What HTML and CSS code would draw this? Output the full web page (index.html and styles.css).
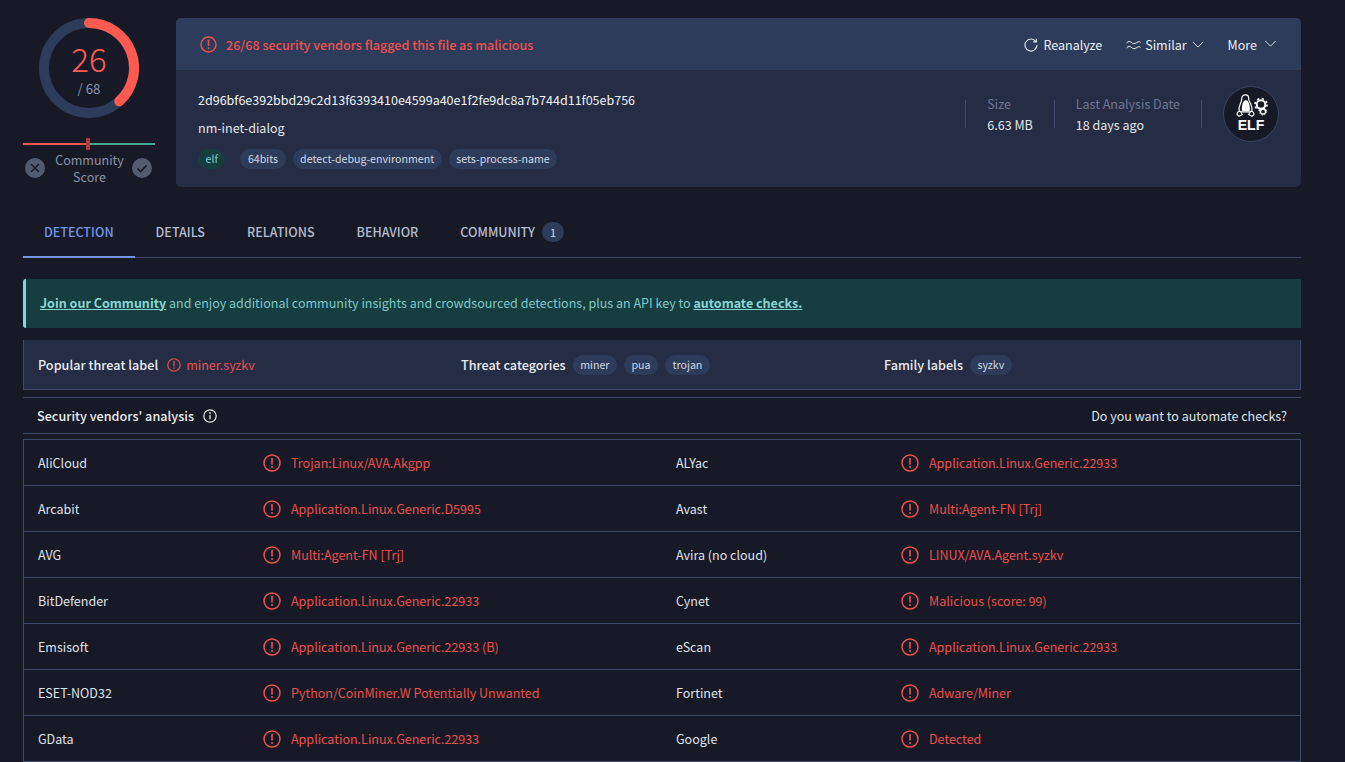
FILE: index.html
```html
<!DOCTYPE html>
<html lang="en">
<head>
<meta charset="utf-8">
<title>VirusTotal - File</title>
<link rel="stylesheet" href="styles.css">
</head>
<body>
<svg class="sprite" width="0" height="0" aria-hidden="true">
  <symbol id="alert" viewBox="0 0 18 18">
    <circle cx="9" cy="9" r="8" fill="none" stroke="currentColor" stroke-width="1.5"/>
    <path d="M9 4.6v5.4" fill="none" stroke="currentColor" stroke-width="1.6" stroke-linecap="round"/>
    <circle cx="9" cy="12.9" r="1" fill="currentColor"/>
  </symbol>
  <symbol id="chev" viewBox="0 0 14 8">
    <path d="M1 1l6 6 6-6" fill="none" stroke="currentColor" stroke-width="1"/>
  </symbol>
</svg>
<main class="page">
  <section class="top">
    <div class="score">
      <div class="ring">
        <svg class="ring-svg" width="100" height="100" viewBox="0 0 100 100">
          <circle cx="50" cy="50" r="45" fill="none" stroke="#2c3c5a" stroke-width="10"/>
          <path d="M50 5A45 45 0 0 1 80.3 83.3" fill="none" stroke="#ff5a50" stroke-width="10" stroke-linecap="round"/>
        </svg>
        <div class="ring-text">
          <div class="ring-num">26</div>
          <div class="ring-total">/ 68</div>
        </div>
      </div>
      <div class="meter"><span class="meter-red"></span><span class="meter-thumb"></span><span class="meter-green"></span></div>
      <div class="community">
        <span class="vote"><svg width="12" height="12" viewBox="0 0 12 12"><path d="M2 2l8 8M10 2l-8 8" fill="none" stroke="#181926" stroke-width="1.500"/></svg></span>
        <span class="community-label">Community<br>Score</span>
        <span class="vote"><svg width="12" height="12" viewBox="0 0 12 12"><path d="M1.500 6.500l3 3 6-6" fill="none" stroke="#181926" stroke-width="1.700"/></svg></span>
      </div>
    </div>
    <div class="card">
      <header class="card-head">
        <div class="flag"><svg class="flag-icon"><use href="#alert"/></svg><span>26/68 security vendors flagged this file as malicious</span></div>
        <nav class="actions">
          <a class="action re"><svg width="14" height="14" viewBox="0 0 14 14"><path d="M11.900 3.600A6 6 0 1 0 13 7" fill="none" stroke="currentColor" stroke-width="1.100"/><path d="M9.200 3.900h3.200V.8" fill="none" stroke="currentColor" stroke-width="1.100"/></svg>Reanalyze</a>
          <a class="action sim"><svg width="15" height="10" viewBox="0 0 15 10"><path d="M.5 3c2-2 3.500-2 5-.5s3 1.500 5 .2 2.800-1.200 4-.4M.5 8c2-2 3.500-2 5-.5s3 1.500 5 .2 2.800-1.200 4-.4" fill="none" stroke="currentColor" stroke-width="1"/></svg>Similar<svg class="chev" width="12" height="7"><use href="#chev"/></svg></a>
          <a class="action more">More<svg class="chev up" width="13" height="7"><use href="#chev"/></svg></a>
        </nav>
      </header>
      <div class="card-body">
        <div class="file">
          <div class="hash">2d96bf6e392bbd29c2d13f6393410e4599a40e1f2fe9dc8a7b744d11f05eb756</div>
          <div class="name">nm-inet-dialog</div>
          <div class="tags">
            <span class="tag tag-elf">elf</span>
            <span class="tag">64bits</span>
            <span class="tag">detect-debug-environment</span>
            <span class="tag">sets-process-name</span>
          </div>
        </div>
        <div class="stats">
          <div class="stat"><div class="stat-label">Size</div><div class="stat-value">6.63 MB</div></div>
          <div class="stat"><div class="stat-label">Last Analysis Date</div><div class="stat-value">18 days ago</div></div>
        </div>
        <div class="elf">
          <svg class="elf-art" width="33" height="25" viewBox="0 0 33 25">
            <path d="M9.500 .8c2.300 0 3.200 1.800 3.200 3.800s.9 3 2.200 5.800 1.600 5 .8 7.400H3.300c-.8-2.400-.6-4.600.8-7.400s1.700-3.800 1.700-5.800S7 .8 9.500.8z" fill="#181926" stroke="#fff" stroke-width="1.200"/>
            <path d="M7.800 7c1-.9 3.200-.9 4.100 0 1.700 3 2.400 6.600 1.700 10H6.100c-.7-3.400 0-7 1.700-10z" fill="#fff"/>
            <path d="M1 20.500c0-2 1.400-3.300 3.300-3.300l2 3.300-3.300 1.800zM18 20.500c0-2-1.400-3.300-3.300-3.300l-2 3.300 3.300 1.800z" fill="#181926" stroke="#fff" stroke-width="1.100"/>
            <circle cx="25" cy="10.500" r="4.300" fill="none" stroke="#fff" stroke-width="2"/>
            <circle cx="25" cy="10.500" r="6" fill="none" stroke="#fff" stroke-width="1.600" stroke-dasharray="2.200 2.510"/>
            <circle cx="27" cy="17.500" r="2.500" fill="#181926" stroke="#fff" stroke-width="1.300"/>
            <circle cx="27" cy="17.500" r="3.600" fill="none" stroke="#fff" stroke-width="1" stroke-dasharray="1.400 1.430"/>
          </svg>
          <span class="elf-text">ELF</span>
        </div>
      </div>
    </div>
  </section>

  <nav class="tabs">
    <a class="tab active">DETECTION</a>
    <a class="tab">DETAILS</a>
    <a class="tab">RELATIONS</a>
    <a class="tab">BEHAVIOR</a>
    <a class="tab">COMMUNITY<span class="count">1</span></a>
  </nav>

  <div class="banner"><a class="banner-link">Join our Community</a> and enjoy additional community insights and crowdsourced detections, plus an API key to <a class="banner-link">automate checks.</a></div>

  <div class="threat">
    <div class="threat-col"><b>Popular threat label</b><svg class="threat-icon"><use href="#alert"/></svg><span class="threat-name">miner.syzkv</span></div>
    <div class="threat-col"><b>Threat categories</b><span class="tag">miner</span><span class="tag">pua</span><span class="tag">trojan</span></div>
    <div class="threat-col"><b>Family labels</b><span class="tag">syzkv</span></div>
  </div>

  <div class="analysis">
    <div class="analysis-title"><b>Security vendors' analysis</b><svg width="14" height="14" viewBox="0 0 14 14"><circle cx="7" cy="7" r="6.200" fill="none" stroke="currentColor" stroke-width="1.200"/><path d="M7 6v4.200" stroke="currentColor" stroke-width="1.300"/><circle cx="7" cy="3.900" r=".9" fill="currentColor"/></svg></div>
    <span>Do you want to automate checks?</span>
  </div>

  <div class="vendors">
    <div class="cell"><span class="vendor">AliCloud</span><svg class="v-icon"><use href="#alert"/></svg><span class="verdict">Trojan:Linux/AVA.Akgpp</span></div>
    <div class="cell"><span class="vendor">ALYac</span><svg class="v-icon"><use href="#alert"/></svg><span class="verdict">Application.Linux.Generic.22933</span></div>
    <div class="cell"><span class="vendor">Arcabit</span><svg class="v-icon"><use href="#alert"/></svg><span class="verdict">Application.Linux.Generic.D5995</span></div>
    <div class="cell"><span class="vendor">Avast</span><svg class="v-icon"><use href="#alert"/></svg><span class="verdict">Multi:Agent-FN [Trj]</span></div>
    <div class="cell"><span class="vendor">AVG</span><svg class="v-icon"><use href="#alert"/></svg><span class="verdict">Multi:Agent-FN [Trj]</span></div>
    <div class="cell"><span class="vendor">Avira (no cloud)</span><svg class="v-icon"><use href="#alert"/></svg><span class="verdict">LINUX/AVA.Agent.syzkv</span></div>
    <div class="cell"><span class="vendor">BitDefender</span><svg class="v-icon"><use href="#alert"/></svg><span class="verdict">Application.Linux.Generic.22933</span></div>
    <div class="cell"><span class="vendor">Cynet</span><svg class="v-icon"><use href="#alert"/></svg><span class="verdict">Malicious (score: 99)</span></div>
    <div class="cell"><span class="vendor">Emsisoft</span><svg class="v-icon"><use href="#alert"/></svg><span class="verdict">Application.Linux.Generic.22933 (B)</span></div>
    <div class="cell"><span class="vendor">eScan</span><svg class="v-icon"><use href="#alert"/></svg><span class="verdict">Application.Linux.Generic.22933</span></div>
    <div class="cell"><span class="vendor">ESET-NOD32</span><svg class="v-icon"><use href="#alert"/></svg><span class="verdict">Python/CoinMiner.W Potentially Unwanted</span></div>
    <div class="cell"><span class="vendor">Fortinet</span><svg class="v-icon"><use href="#alert"/></svg><span class="verdict">Adware/Miner</span></div>
    <div class="cell"><span class="vendor">GData</span><svg class="v-icon"><use href="#alert"/></svg><span class="verdict">Application.Linux.Generic.22933</span></div>
    <div class="cell"><span class="vendor">Google</span><svg class="v-icon"><use href="#alert"/></svg><span class="verdict">Detected</span></div>
  </div>
</main>
</body>
</html>
```
FILE: styles.css
```css
* { box-sizing: border-box; }
html, body { height: 762px; overflow: hidden; }
body {
  margin: 0;
  background: #181926;
  color: #dfe2ea;
  font-family: "Noto Sans CJK JP", "Noto Sans", sans-serif;
  font-size: 12.530px;
  line-height: 20px;
}
.sprite { position: absolute; }
.page { width: 1278px; margin-left: 23px; }
b { font-weight: 500; font-size: 12.650px; }

/* top */
.top { display: flex; gap: 21px; padding-top: 18px; height: 187px; }
.score { width: 132px; flex: none; }
.ring { display: grid; width: 100px; height: 100px; margin-left: 16px; }
.ring-svg, .ring-text { grid-area: 1 / 1; }
.ring-text { text-align: center; padding-top: 20px; }
.ring-num { font-size: 33px; line-height: 40px; font-weight: 300; color: #ff5a50; }
.ring-total { font-size: 13.300px; line-height: 18px; margin-top: 2px; color: #8a92aa; }
.meter { display: flex; align-items: center; height: 12px; margin-top: 20px; }
.meter-red { flex: 1; height: 2px; background: #f0544f; }
.meter-green { flex: 1; height: 2px; background: #45a88e; }
.meter-thumb { width: 4px; height: 12px; border-radius: 1px; background: #b23a38; margin: 0 -2px 0 -2px; position: relative; left: -1px; }
.community { display: flex; align-items: center; justify-content: space-between; padding: 1px 3px 0 2px; }
.community-label { color: #8a92aa; text-align: center; line-height: 17px; margin-left: 2px; }
.vote { width: 20px; height: 20px; border-radius: 50%; background: #525b70; display: flex; align-items: center; justify-content: center; }

.card { flex: 1; height: 169px; border-radius: 5px; background: #252d44; overflow: hidden; }
.card-head { height: 52px; padding: 1px 24px 0 24px; background: #2d3c5a; display: flex; align-items: center; justify-content: space-between; }
.flag { display: flex; align-items: center; gap: 9px; color: #f0504d; font-weight: 500; font-size: 12.580px; }
.flag-icon { width: 17px; height: 17px; }
.actions { display: flex; align-items: center; gap: 24px; color: #eceef3; }
.action { display: flex; align-items: center; }
.re svg { margin-right: 5px; }
.sim svg:first-child { margin-right: 4px; }
.chev { margin-left: 5px; }
.chev.up { margin-left: 7px; margin-top: -3px; }

.card-body { display: flex; align-items: flex-start; padding: 0 22px 0 22px; }
.file { flex: 1; padding-top: 20px; }
.hash { color: #f0f1f5; }
.name { margin-top: 8px; color: #e4e6ec; }
.tags { display: flex; gap: 7px; margin-top: 11px; }
.tag { display: inline-flex; align-items: center; height: 20px; padding: 0 7.500px; border-radius: 10px; background: #2d3c5a; color: #d3d7e2; font-size: 10.650px; white-space: nowrap; }
.tag-elf { background: #163d40; color: #76c8c8; margin-right: 8px; }

.stats { display: flex; margin-top: 30px; }
.stat { border-left: 1px solid #3f4a6b; height: 28px; padding: 0 21px; line-height: 21px; }
.stat:last-child { border-right: 1px solid #3f4a6b; }
.stat-label { color: #6d7690; margin-top: -7px; }
.stat-value { color: #e4e6ec; }
.elf { width: 56px; height: 56px; margin: 16px 0 0 21px; border-radius: 50%; background: #181926; border: 1px solid #3a4566; display: flex; flex-direction: column; align-items: center; padding-top: 7px; }
.elf-art { flex: none; margin-left: 2px; }
.elf-text { color: #fff; font-family: "Liberation Sans", sans-serif; font-weight: 700; font-size: 14px; line-height: 11px; margin-top: 1px; }

/* tabs */
.tabs { display: flex; height: 51px; margin-top: 20px; border-bottom: 1px solid #3f4a6b; font-weight: 500; color: #b5bcd0; font-size: 12.550px; }
.tab { display: flex; align-items: center; padding: 0 21px; height: 51px; border-bottom: 2px solid transparent; }
.tab.active { color: #6f96ea; border-bottom-color: #6f96ea; }
.count { display: flex; align-items: center; justify-content: center; width: 22px; height: 20px; margin-left: 7px; border-radius: 10px; background: #2d3c5a; color: #d3d7e2; font-size: 11px; font-weight: 400; }

/* banner */
.banner { height: 49px; margin-top: 21px; padding: 0 0 2px 14px; display: flex; align-items: center; white-space: pre; background: #163d40; border-left: 3px solid #7fd8de; border-radius: 3px 0 0 3px; color: #7fc9c9; }
.banner-link { color: #8ad6d6; font-weight: 700; text-decoration: underline; }

/* threat */
.threat { display: grid; grid-template-columns: 423px 423px 1fr; height: 50px; margin-top: 12px; padding-left: 14px; background: #252d44; border: 1px solid #3f4a6b; border-top: 0; }
.threat-col { display: flex; align-items: center; gap: 7px; }
.threat-col b { color: #e9ebf0; }
.threat-icon { width: 14px; height: 14px; color: #e8504c; margin-left: 2px; }
.threat-name { color: #e8504c; margin-left: -2px; }

/* analysis */
.analysis { display: flex; align-items: center; justify-content: space-between; height: 37px; margin-top: 7px; padding: 0 14px; border-top: 1px solid #3f4a6b; border-bottom: 1px solid #3f4a6b; }
.analysis-title { display: flex; align-items: center; gap: 9px; color: #e9ebf0; }

/* vendors */
.vendors { display: grid; grid-template-columns: 1fr 1fr; margin-top: 5px; border: 1px solid #3f4a6b; border-bottom: 0; }
.cell { display: flex; align-items: center; height: 46px; padding-left: 14px; border-bottom: 1px solid #3f4a6b; }
.vendor { width: 225px; flex: none; color: #dfe2ea; }
.v-icon { width: 18px; height: 18px; color: #f0504d; flex: none; }
.verdict { margin-left: 10px; color: #e8504c; }
```
